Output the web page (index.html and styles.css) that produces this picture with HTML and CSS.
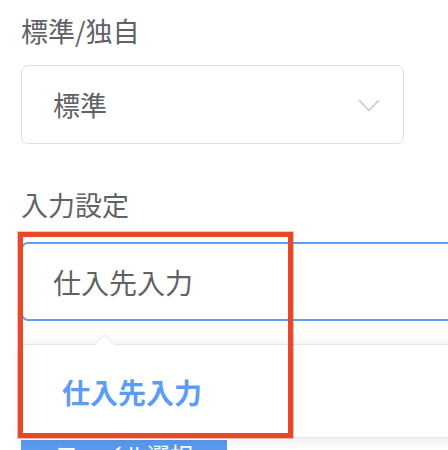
FILE: index.html
```html
<!DOCTYPE html>
<html lang="ja">
<head>
<meta charset="utf-8">
<link rel="stylesheet" href="styles.css">
</head>
<body>
<div class="form">
  <div class="item item-first">
    <div class="label label-first">標準/独自</div>
    <div class="select">
      <span class="select-text">標準</span>
      <svg class="chevron" width="22" height="13" viewBox="0 0 22 13"><path d="M1 1 L11 11.5 L21 1" fill="none" stroke="#c0c4cc" stroke-width="1.4"/></svg>
    </div>
  </div>
  <div class="item">
    <div class="label label-second">入力設定</div>
    <div class="input-wrap">
      <div class="input"><span class="input-text">仕入先入力</span></div>
      <div class="popper">
        <div class="arrow"></div>
        <div class="option">仕入先入力</div>
      </div>
    </div>
  </div>
  <div class="button">ファイル選択</div>
</div>
<div class="annotation"></div>
</body>
</html>
```

FILE: styles.css
```css
html, body {
  margin: 0;
  padding: 0;
  background: #ffffff;
  overflow: hidden;
  width: 448px;
  height: 450px;
}
body {
  position: relative;
  font-family: "Noto Sans CJK JP", "Noto Sans", sans-serif;
  color: #606266;
}
.form {
  padding: 15px 0 0 21px;
}
.label {
  font-size: 27px;
  line-height: 32px;
  color: #606266;
}
.label-first {
  margin-bottom: 18px;
}
.item-first {
  margin-bottom: 45px;
}
.label-second {
  margin-bottom: 21px;
}
.select {
  box-sizing: border-box;
  width: 383px;
  height: 79px;
  border: 1.5px solid #dcdfe6;
  border-radius: 7px;
  display: flex;
  align-items: center;
  justify-content: space-between;
  padding: 0 23px 0 31px;
}
.select-text {
  font-size: 27px;
  color: #606266;
}
.chevron {
  display: block;
  margin-top: 2px;
}
.input-wrap {
  position: relative;
}
.input {
  box-sizing: border-box;
  width: 480px;
  height: 79px;
  border: 2px solid #609ef5;
  border-radius: 7px;
  display: flex;
  align-items: center;
  padding-left: 30px;
}
.input-text {
  font-size: 28px;
  color: #606266;
}
.popper {
  position: absolute;
  left: 0;
  top: 102px;
  width: 480px;
  height: 94px;
  box-sizing: border-box;
  background: #ffffff;
  border: 1.5px solid #e4e7ed;
  border-radius: 4px;
  box-shadow: 0 2px 14px rgba(0, 0, 0, 0.1);
  display: flex;
  align-items: center;
  z-index: 2;
}
.arrow {
  position: absolute;
  left: 75px;
  top: -8px;
  width: 14px;
  height: 14px;
  background: #ffffff;
  border-top: 1.5px solid #e4e7ed;
  border-left: 1.5px solid #e4e7ed;
  transform: rotate(45deg);
}
.option {
  padding-left: 40px;
  font-size: 28px;
  font-weight: 700;
  color: #5b9cf6;
  margin-top: 2px;
}
.button {
  margin-top: 119px;
  width: 206px;
  height: 40px;
  background: #5b9bf0;
  color: #ffffff;
  font-size: 23px;
  line-height: 28px;
  text-align: center;
}
.annotation {
  position: absolute;
  left: 18px;
  top: 232px;
  width: 275px;
  height: 206px;
  box-sizing: border-box;
  border: 5px solid #e8472b;
  box-shadow: 0 0 0 1px rgba(232, 71, 43, 0.35);
  z-index: 5;
}
```
